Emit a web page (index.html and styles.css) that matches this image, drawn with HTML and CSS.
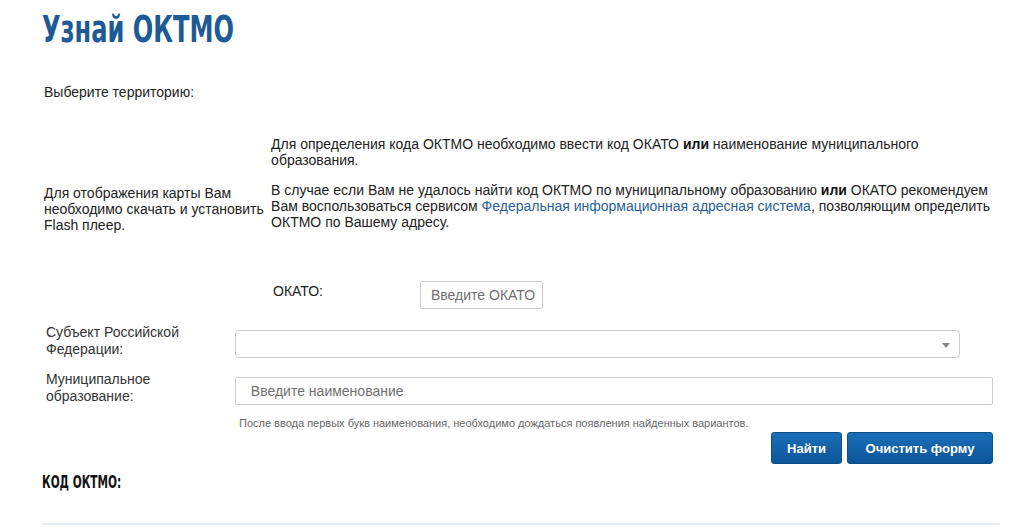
FILE: index.html
```html
<!DOCTYPE html>
<html lang="ru">
<head>
<meta charset="utf-8">
<title>Узнай ОКТМО</title>
<link rel="stylesheet" href="styles.css">
</head>
<body>
<div class="page">
  <h1 class="title">Узнай ОКТМО</h1>
  <p class="choose">Выберите территорию:</p>
  <div class="map-row">
    <div class="flash">Для отображения карты Вам необходимо скачать и установить Flash плеер.</div>
    <div class="info">
      <p>Для определения кода ОКТМО необходимо ввести код ОКАТО <b>или</b> наименование муниципального<br>образования.</p>
      <p>В случае если Вам не удалось найти код ОКТМО по муниципальному образованию <b>или</b> ОКАТО рекомендуем<br>Вам воспользоваться сервисом <a href="#">Федеральная информационная адресная система</a>, позволяющим определить<br>ОКТМО по Вашему адресу.</p>
    </div>
  </div>
  <div class="okato-row">
    <span class="okato-label">ОКАТО:</span>
    <input class="okato-input" type="text" placeholder="Введите ОКАТО">
  </div>
  <div class="form-row">
    <label class="form-label">Субъект Российской Федерации:</label>
    <div class="select">
      <span class="arrow"></span>
    </div>
  </div>
  <div class="form-row">
    <label class="form-label">Муниципальное образование:</label>
    <input class="name-input" type="text" placeholder="Введите наименование">
  </div>
  <p class="hint">После ввода первых букв наименования, необходимо дождаться появления найденных вариантов.</p>
  <div class="buttons">
    <button class="btn">Найти</button>
    <button class="btn">Очистить форму</button>
  </div>
  <h2 class="code">КОД ОКТМО:</h2>
  <div class="result"></div>
</div>
</body>
</html>
```
FILE: styles.css
```css
html, body {
  margin: 0;
  padding: 0;
  background: #fff;
}
body {
  font-family: Arial, "Liberation Sans", sans-serif;
  font-size: 14px;
  color: #222;
  overflow: hidden;
}
.page {
  padding: 0 40px 0 42px;
  width: 951px;
}
.title {
  margin: 0;
  padding-top: 6px;
  height: 50px;
  font-family: "DejaVu Sans Condensed", "DejaVu Sans", sans-serif;
  font-stretch: condensed;
  font-weight: bold;
  font-size: 38px;
  line-height: 46px;
  color: #1d5a96;
  transform: scaleX(0.705);
  transform-origin: left center;
}
.choose {
  margin: 28px 0 0 2px;
  line-height: 16px;
}
.map-row {
  display: flex;
  margin-top: 36px;
}
.flash {
  width: 227px;
  margin-left: 2px;
  margin-right: 2px;
  padding-top: 49px;
  line-height: 16px;
}
.info {
  width: 728px;
  line-height: 16px;
  white-space: nowrap;
}
.info p {
  margin: 0 0 14px 0;
}
.info b {
  font-weight: bold;
  color: #111;
}
.info a {
  color: #2a5f95;
  text-decoration: none;
}
.okato-row {
  display: flex;
  align-items: flex-start;
  margin-top: 37px;
  margin-left: 231px;
}
.okato-label {
  width: 147px;
  padding-top: 2px;
  line-height: 16px;
}
.okato-input {
  box-sizing: border-box;
  width: 123px;
  height: 28px;
  border: 1px solid #ccc;
  border-radius: 2px;
  padding: 0 0 0 10px;
  font-family: Arial, "Liberation Sans", sans-serif;
  font-size: 14px;
  color: #555;
}
.okato-input::placeholder {
  color: #6f6f6f;
}
.form-row {
  display: flex;
  align-items: flex-start;
}
.okato-row + .form-row {
  margin-top: 21px;
}
.form-row + .form-row {
  margin-top: 19px;
}
.form-label {
  width: 145px;
  margin-left: 4px;
  margin-right: 44px;
  margin-top: -6px;
  line-height: 17px;
  color: #333;
}
.select {
  position: relative;
  box-sizing: border-box;
  width: 725px;
  height: 28px;
  border: 1px solid #ccc;
  border-radius: 4px;
  background: #fff;
}
.arrow {
  position: absolute;
  right: 9px;
  top: 12px;
  width: 0;
  height: 0;
  border-left: 4px solid transparent;
  border-right: 4px solid transparent;
  border-top: 5px solid #888;
}
.name-input {
  box-sizing: border-box;
  width: 759px;
  height: 28px;
  border: 1px solid #ccc;
  border-radius: 2px;
  padding: 0 0 0 15px;
  font-family: Arial, "Liberation Sans", sans-serif;
  font-size: 14px;
  color: #555;
}
.name-input::placeholder {
  color: #6f6f6f;
}
.hint {
  margin: 11px 0 0 197px;
  font-size: 11px;
  line-height: 14px;
  color: #666;
}
.buttons {
  display: flex;
  justify-content: flex-end;
  gap: 5px;
  margin-top: 2px;
  margin-right: 0;
}
.btn {
  height: 32px;
  padding: 0;
  border: 1px solid #0a4f8c;
  border-radius: 3px;
  background: linear-gradient(#1b6fb8, #0d5599);
  color: #fff;
  font-family: Arial, "Liberation Sans", sans-serif;
  font-size: 13px;
  font-weight: bold;
}
.btn:first-child {
  width: 71px;
}
.btn:last-child {
  width: 146px;
}
.code {
  margin: 7px 0 0 0;
  font-family: "DejaVu Sans Condensed", "DejaVu Sans", sans-serif;
  font-stretch: condensed;
  font-weight: bold;
  font-size: 17px;
  line-height: 22px;
  color: #111;
  transform: scaleX(0.69);
  transform-origin: left center;
}
.result {
  margin-top: 30px;
  height: 20px;
  border-top: 2px solid #e6edf3;
  width: 958px;
}
```
